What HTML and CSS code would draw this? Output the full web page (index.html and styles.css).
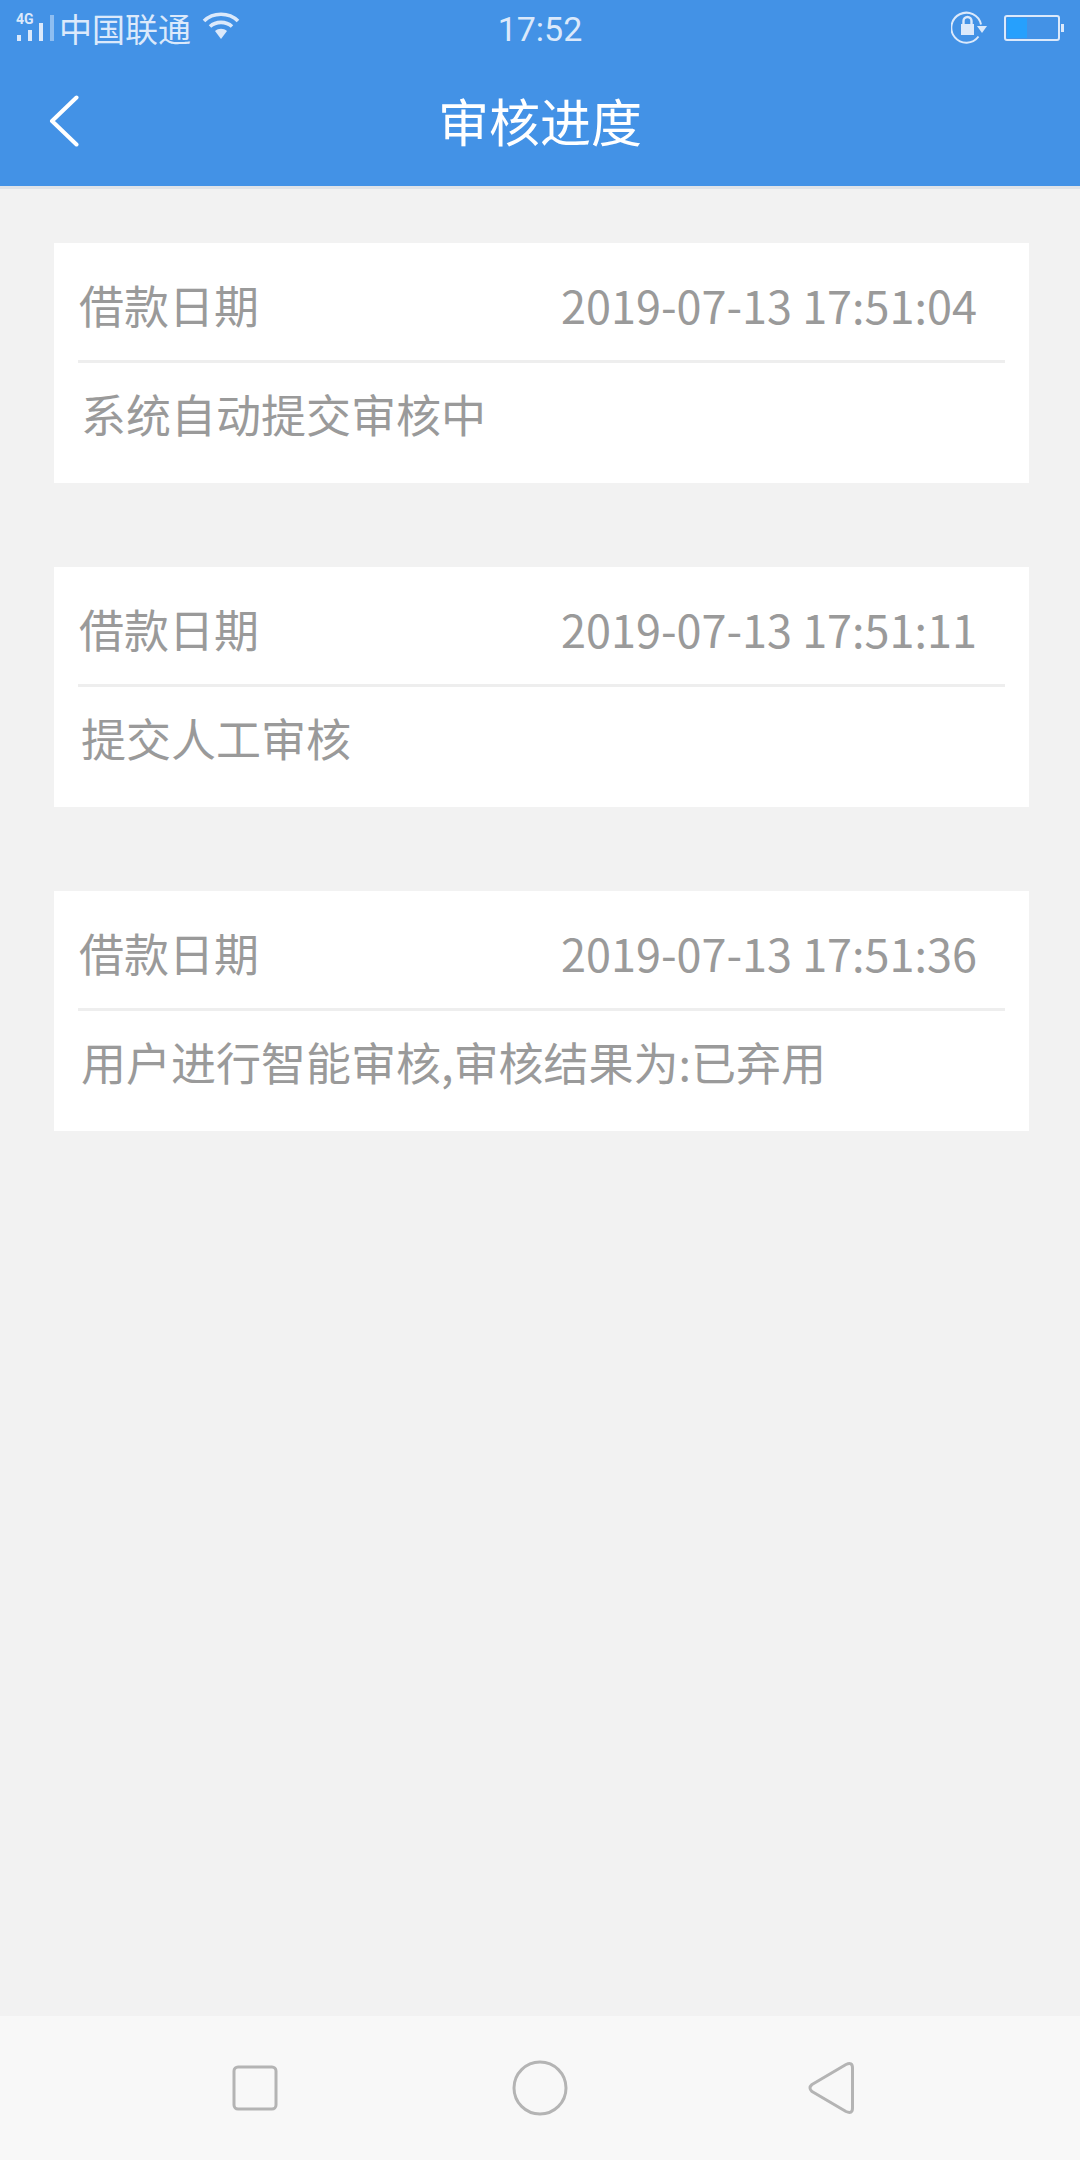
FILE: index.html
```html
<!DOCTYPE html>
<html lang="zh-CN">
<head>
<meta charset="utf-8">
<title>审核进度</title>
<link rel="stylesheet" href="styles.css">
</head>
<body>
<div class="phone">
  <header class="top">
    <div class="status">
      <div class="status-left">
        <div class="signal">
          <span class="net">4G</span>
          <svg class="signal-bars" width="38" height="28" viewBox="0 0 38 28"><g fill="#dbe9fb"><rect x="1" y="21" width="4" height="6"/><rect x="12" y="16" width="4" height="11"/><rect x="23" y="9" width="4" height="18"/><rect x="34" y="1" width="4" height="26" opacity=".5"/></g></svg>
        </div>
        <span class="carrier">中国联通</span>
        <svg class="wifi" width="38" height="28" viewBox="0 0 38 28"><g fill="none" stroke="#dbe9fb" stroke-width="3.6"><path d="M2 9 C11 0 27 0 36 9"/><path d="M8 14.5 C14 9 24 9 30 14.5"/></g><path d="M13 19 C16.500 16 21.500 16 25 19 L19 27 Z" fill="#dbe9fb"/></svg>
      </div>
      <span class="time">17:52</span>
      <div class="status-right">
        <svg class="lock" width="38" height="34" viewBox="0 0 38 34"><path d="M27.500 25.500 A15 15 0 1 1 30 13.500" fill="none" stroke="#dbe9fb" stroke-width="2"/><path d="M10 13 h13 v11 h-13 z" fill="#dbe9fb"/><path d="M12.500 13 v-3 a4 4 0 0 1 8 0 v3" fill="none" stroke="#dbe9fb" stroke-width="2.400"/><path d="M26 15 h10 l-5 7 z" fill="#dbe9fb"/></svg>
        <div class="battery"><div class="battery-body"><div class="battery-fill"></div></div><div class="battery-tip"></div></div>
      </div>
    </div>
    <div class="titlebar">
      <svg class="back" width="30" height="52" viewBox="0 0 30 52"><path d="M27.500 2.500 L3 26 L27.500 49.500" fill="none" stroke="#fff" stroke-width="4" stroke-linecap="round" stroke-linejoin="round"/></svg>
      <h1 class="title">审核进度</h1>
    </div>
  </header>

  <main class="list">
    <section class="card">
      <div class="row"><span class="label">借款日期</span><span class="date">2019-07-13 17:51:04</span></div>
      <p class="desc">系统自动提交审核中</p>
    </section>
    <section class="card">
      <div class="row"><span class="label">借款日期</span><span class="date">2019-07-13 17:51:11</span></div>
      <p class="desc">提交人工审核</p>
    </section>
    <section class="card">
      <div class="row"><span class="label">借款日期</span><span class="date">2019-07-13 17:51:36</span></div>
      <p class="desc">用户进行智能审核,审核结果为:已弃用</p>
    </section>
  </main>

  <nav class="navbar">
    <svg class="nav-square" width="46" height="46" viewBox="0 0 46 46"><rect x="2" y="2" width="42" height="42" rx="4" fill="none" stroke="#b4b4b4" stroke-width="3"/></svg>
    <svg class="nav-circle" width="56" height="56" viewBox="0 0 56 56"><circle cx="28" cy="28" r="26" fill="none" stroke="#b4b4b4" stroke-width="3"/></svg>
    <svg class="nav-tri" width="46" height="54" viewBox="0 0 46 54"><path d="M38 3.500 Q44.500 0.500 44.500 7 V47 Q44.500 53.500 38 50.500 L4 30.500 Q0 27 4 23.500 Z" fill="none" stroke="#b4b4b4" stroke-width="3" stroke-linejoin="round"/></svg>
  </nav>
</div>
</body>
</html>
```
FILE: styles.css
```css
* { box-sizing: border-box; }
html, body { margin: 0; padding: 0; }
body { font-family: "Noto Sans CJK SC", "Noto Sans", sans-serif; background: #f2f2f2; }
.phone { width: 1080px; height: 2160px; display: flex; flex-direction: column; overflow: hidden; }

.top { background: #4392e6; height: 189px; flex: none; border-bottom: 3px solid #dfe3e8; }
.status { height: 60px; display: grid; grid-template-columns: 1fr auto 1fr; align-items: center; color: #dbe9fb; padding: 0 16px 4px 16px; }
.status-left { display: flex; align-items: center; }
.signal { position: relative; width: 38px; height: 28px; }
.net { position: absolute; left: 0; top: -3px; font: bold 14px/16px "Roboto", sans-serif; color: #dbe9fb; }
.signal-bars { display: block; }
.carrier { font-size: 33px; line-height: 40px; margin-left: 5px; }
.wifi { margin-left: 11px; margin-top: -4px; display: block; }
.time { font-family: "Roboto", sans-serif; font-size: 34px; line-height: 40px; padding-top: 2px; }
.status-right { display: flex; justify-content: flex-end; align-items: center; }
.lock { display: block; }
.battery { display: flex; align-items: center; margin-left: 15px; }
.battery-body { width: 56px; height: 26px; border: 2px solid #dbe9fb; border-radius: 3px; padding: 1px; }
.battery-fill { width: 20px; height: 100%; background: #26a0fd; }
.battery-tip { width: 3px; height: 8px; background: #dbe9fb; margin-left: 1px; }

.titlebar { height: 126px; display: flex; align-items: center; justify-content: center; position: relative; padding-bottom: 6px; }
.back { position: absolute; left: 49px; top: 35px; }
.title { margin: 0; font-size: 51px; font-weight: 400; color: #fff; line-height: 70px; }

.list { flex: 1; padding: 54px 51px 0 54px; display: flex; flex-direction: column; gap: 84px; }
.card { height: 240px; background: #fff; padding: 0 24px; }
.row { height: 120px; border-bottom: 3px solid #eeeeee; display: flex; justify-content: space-between; align-items: center; padding: 6px 28px 0 1px; }
.label, .date { font-size: 45px; line-height: 60px; color: #9a9a9a; opacity: .999; }
.desc { margin: 0; padding: 0 0 20px 3px; height: 120px; display: flex; align-items: center; font-size: 45px; color: #9a9a9a; opacity: .999; }

.navbar { flex: none; height: 144px; background: #f8f8f8; display: flex; align-items: center; }
.nav-square { margin-left: 232px; }
.nav-circle { margin-left: 234px; }
.nav-tri { margin-left: 240px; }
```
